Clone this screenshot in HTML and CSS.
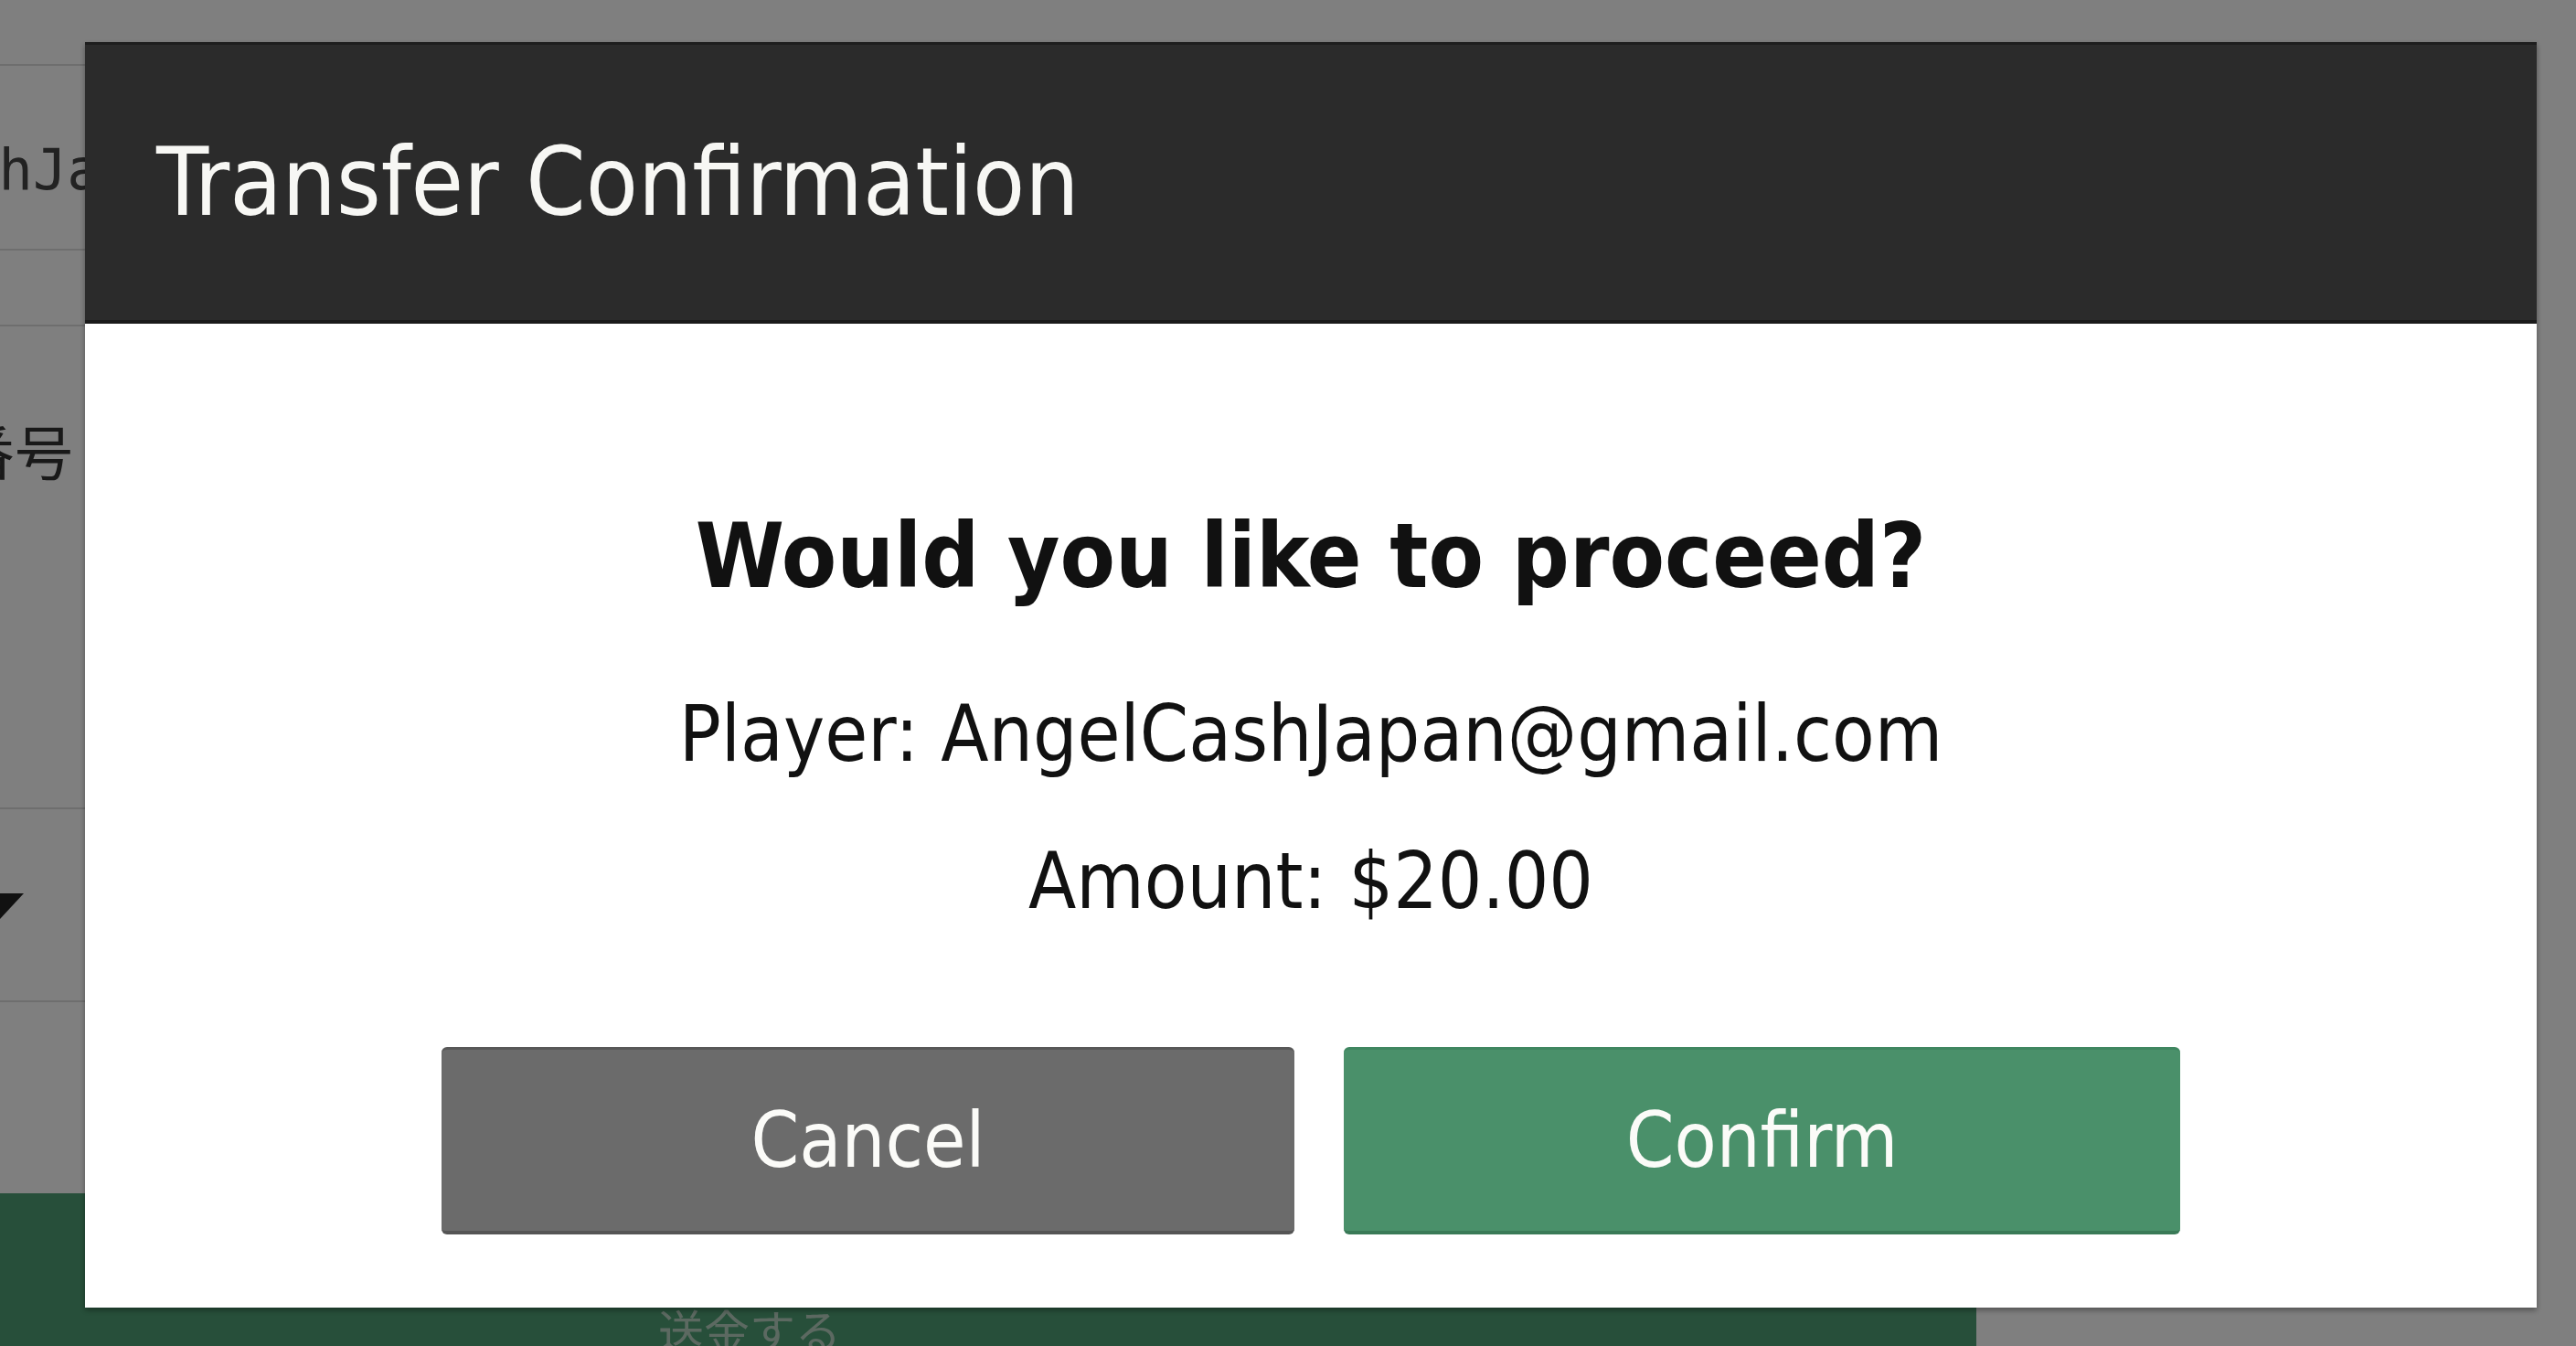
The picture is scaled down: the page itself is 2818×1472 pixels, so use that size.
FILE: index.html
```html
<!DOCTYPE html>
<html lang="ja">
  <head>
    <meta charset="UTF-8" />
    <title>Transfer Confirmation</title>
    <link rel="stylesheet" href="styles.css">
  </head>
  <body>

    <!-- Page behind the dialog -->
    <div class="page">
      <div class="row row-player">
        <span class="value">AngelCashJapan@gmail.com</span>
      </div>
      <div class="row row-gap"></div>
      <div class="row row-phone">
        <span class="label">電話番号</span>
      </div>
      <div class="row row-select">
        <span class="caret"></span>
      </div>
      <div class="row row-empty"></div>
      <div class="submit-bar">
        <span>送金する</span>
      </div>
    </div>

    <!-- Dialog -->
    <div class="overlay">
      <div class="modal">
        <div class="modal-header">
          <h2>Transfer Confirmation</h2>
        </div>
        <div class="modal-body">
          <p class="question">Would you like to proceed?</p>
          <p class="detail">Player: AngelCashJapan@gmail.com</p>
          <p class="detail amount">Amount: $20.00</p>
          <div class="actions">
            <button class="btn btn-cancel">Cancel</button>
            <button class="btn btn-confirm">Confirm</button>
          </div>
        </div>
      </div>
    </div>

  </body>
</html>
```

FILE: styles.css
```css
* {
  box-sizing: border-box;
}

body {
  margin: 0;
  font-family: 'DejaVu Sans', 'Noto Sans CJK JP', sans-serif;
  background-color: #ffffff;
  min-height: 100vh;
  overflow: hidden;
}

/* page behind the dialog */

.page {
  width: 2162px;
  min-height: 100vh;
  display: flex;
  flex-direction: column;
  padding-top: 70px;
}

.row {
  display: flex;
  border-top: 2px solid #dcdcdc;
}

.row-player {
  height: 202px;
  padding-top: 77px;
}

.row-player .value {
  margin-left: -300px;
  font-family: 'DejaVu Sans Mono', monospace;
  font-size: 62px;
  color: #444;
  white-space: nowrap;
}

.row-gap {
  height: 83px;
}

.row-phone {
  height: 528px;
  padding-top: 88px;
}

.row-phone .label {
  margin-left: -176px;
  font-size: 64px;
  color: #333;
  white-space: nowrap;
}

.row-select {
  height: 211px;
  padding-top: 92px;
}

.caret {
  margin-left: -26px;
  width: 0;
  height: 0;
  border-left: 26px solid transparent;
  border-right: 26px solid transparent;
  border-top: 28px solid #222;
}

.row-empty {
  height: 211px;
}

.submit-bar {
  flex: 1;
  background-color: #4e9f74;
  padding: 112px 0 0 720px;
  color: #b9d3c3;
  font-size: 50px;
}

/* dialog */

.overlay {
  position: fixed;
  inset: 0;
  background-color: rgba(0, 0, 0, 0.5);
  display: flex;
  padding: 46px 43px 42px 93px;
}

.modal {
  flex: 1;
  display: flex;
  flex-direction: column;
  background: white;
  box-shadow: 0 3px 6px rgba(0, 0, 0, 0.35);
  font-stretch: condensed;
}

.modal-header {
  height: 308px;
  background-color: #2b2b2b;
  border-top: 3px solid #1e1e1e;
  border-bottom: 4px solid #1a1a1a;
  display: flex;
  align-items: center;
  padding-left: 78px;
}

.modal-header h2 {
  margin: 0;
  color: #f7f7f4;
  font-size: 104px;
  font-weight: normal;
  line-height: 1.2;
}

.modal-body {
  flex: 1;
  display: flex;
  flex-direction: column;
  align-items: center;
  padding-top: 196px;
}

.modal-body p {
  margin: 0;
  line-height: 1.2;
  color: #111;
}

.question {
  font-size: 98px;
  font-weight: bold;
  color: #0a0a0a;
}

.detail {
  font-size: 85px;
  margin-top: 84px !important;
}

.detail.amount {
  margin-top: 59px !important;
}

.actions {
  display: flex;
  gap: 54px;
  margin-top: 130px;
}

.btn {
  height: 205px;
  border: none;
  border-radius: 6px;
  color: #fbfbf8;
  font-family: inherit;
  font-stretch: condensed;
  font-size: 84px;
  cursor: pointer;
}

.btn-cancel {
  width: 933px;
  background-color: #6b6b6b;
  border-top: 3px solid #585858;
  border-bottom: 4px solid #555;
}

.btn-confirm {
  width: 915px;
  background-color: #4a906a;
  border-top: 3px solid #3f8660;
  border-bottom: 4px solid #3a7a57;
}
```
